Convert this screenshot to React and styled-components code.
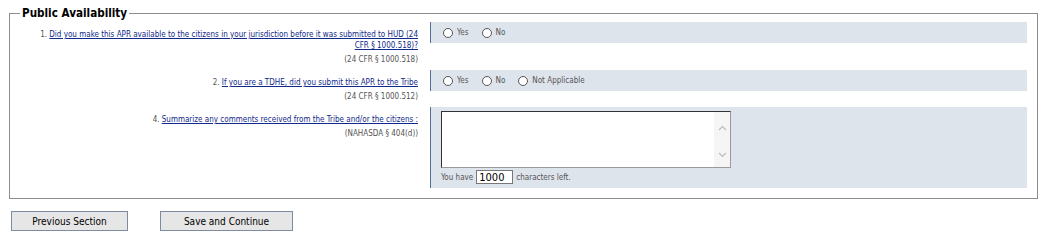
import styled, { createGlobalStyle } from "styled-components";

const GlobalStyle = createGlobalStyle`
  body {
    margin: 0;
    background: #fff;
    font-family: "DejaVu Sans Condensed", "DejaVu Sans", sans-serif;
  }
`;

const Page = styled.div`
  padding: 0 11px 0 9px;
`;

const Fieldset = styled.fieldset`
  margin: 5px 0 0;
  padding: 1px 10px 10px 0;
  border: 1px solid #8c8c8c;
  min-width: 0;
`;

const Legend = styled.legend`
  margin-left: 10px;
  padding: 0 2px;
  font-size: 11.6px;
  font-weight: bold;
  line-height: 16px;
  color: #000;
`;

const Rows = styled.div`
  display: grid;
  grid-template-columns: 420px 1fr;
  row-gap: 5px;
  align-items: start;
`;

const Label = styled.div`
  text-align: right;
  padding: 7px 12px 0 0;
  font-size: 8px;
  line-height: 11px;
  color: #555;
`;

const Question = styled.a`
  color: #10298a;
  text-decoration: underline;
`;

const Cite = styled.div`
  margin-top: 3px;
`;

const Panel = styled.div`
  background: #dee4ec;
  border-left: 1px solid #56709a;
  padding: ${(p) => (p.$tall ? "4px 10px" : "0 12px")};
  min-height: ${(p) => (p.$tall ? "auto" : "21px")};
  display: flex;
  flex-direction: ${(p) => (p.$tall ? "column" : "row")};
  align-items: ${(p) => (p.$tall ? "flex-start" : "center")};
`;

const Choice = styled.label`
  display: inline-flex;
  align-items: center;
  margin-right: 13px;
  font-size: 8px;
  color: #555;
`;

const Radio = styled.input.attrs({ type: "radio" })`
  appearance: none;
  width: 10px;
  height: 10px;
  margin: 0 4px 0 0;
  border: 1px solid #555;
  border-radius: 50%;
  background: #fff;
`;

const TextBox = styled.div`
  display: flex;
  width: 290px;
  height: 57px;
  box-sizing: border-box;
  border: 1px solid;
  border-color: #333 #9a9a9a #9a9a9a #333;
  background: #fff;
`;

const Area = styled.textarea`
  flex: 1;
  border: 0;
  resize: none;
  outline: none;
  padding: 2px;
  font: inherit;
  font-size: 11px;
  background: transparent;
`;

const Track = styled.div`
  width: 16px;
  background: #f5f5f5;
  display: flex;
  flex-direction: column;
  justify-content: space-between;
  align-items: center;
  padding: 13px 0 9px;
`;

const Counter = styled.div`
  margin-top: 2px;
  display: flex;
  align-items: center;
  font-size: 8px;
  color: #555;
`;

const CountInput = styled.input`
  width: 37px;
  height: 14px;
  box-sizing: border-box;
  margin: 0 3px;
  padding: 0 2px;
  border: 1px solid #777;
  font-family: inherit;
  font-size: 11px;
  color: #000;
`;

const Actions = styled.div`
  display: flex;
  gap: 32px;
  padding: 12px 0 0 2px;
`;

const Button = styled.button`
  width: ${(p) => p.$w}px;
  height: 20px;
  background: #e6e6e6;
  border: 1px solid #7d8ca3;
  font-family: inherit;
  font-size: 10px;
  color: #000;
  padding: 0;
  cursor: pointer;
`;

const Chevron = ({ up }) => (
  <svg width="9" height="6" viewBox="0 0 9 6">
    <path
      d={up ? "M1 5 L4.5 1.5 L8 5" : "M1 1 L4.5 4.5 L8 1"}
      fill="none"
      stroke="#bdbdbd"
      strokeWidth="1.2"
    />
  </svg>
);

const App = () => (
  <>
    <GlobalStyle />
    <Page>
      <Fieldset>
        <Legend>Public Availability</Legend>
        <Rows>
          <Label>
            1.{" "}
            <Question href="#">
              Did you make this APR available to the citizens in your jurisdiction before it was submitted to HUD (24
              <br />
              CFR § 1000.518)?
            </Question>
            <Cite>(24 CFR § 1000.518)</Cite>
          </Label>
          <Panel>
            <Choice><Radio name="q1" />Yes</Choice>
            <Choice><Radio name="q1" />No</Choice>
          </Panel>

          <Label>
            2. <Question href="#">If you are a TDHE, did you submit this APR to the Tribe</Question>
            <Cite>(24 CFR § 1000.512)</Cite>
          </Label>
          <Panel>
            <Choice><Radio name="q2" />Yes</Choice>
            <Choice><Radio name="q2" />No</Choice>
            <Choice><Radio name="q2" />Not Applicable</Choice>
          </Panel>

          <Label>
            4. <Question href="#">Summarize any comments received from the Tribe and/or the citizens :</Question>
            <Cite>(NAHASDA § 404(d))</Cite>
          </Label>
          <Panel $tall>
            <TextBox>
              <Area />
              <Track>
                <Chevron up />
                <Chevron />
              </Track>
            </TextBox>
            <Counter>
              You have <CountInput defaultValue="1000" /> characters left.
            </Counter>
          </Panel>
        </Rows>
      </Fieldset>
      <Actions>
        <Button $w={117}>Previous Section</Button>
        <Button $w={133}>Save and Continue</Button>
      </Actions>
    </Page>
  </>
);

export default App;
